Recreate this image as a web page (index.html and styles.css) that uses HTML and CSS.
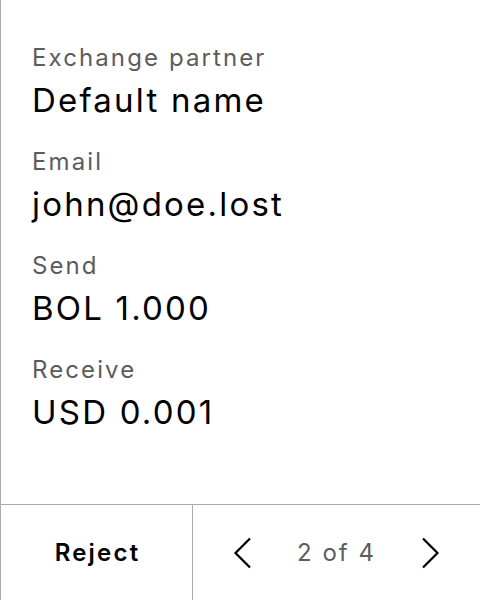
FILE: index.html
```html
<!DOCTYPE html>
<html>
<head>
<meta charset="utf-8">
<link rel="stylesheet" href="styles.css">
</head>
<body>
<div class="panel">
  <div class="details">
    <div class="field">
      <div class="label">Exchange partner</div>
      <div class="value">Default name</div>
    </div>
    <div class="field">
      <div class="label">Email</div>
      <div class="value">john@doe.lost</div>
    </div>
    <div class="field">
      <div class="label">Send</div>
      <div class="value">BOL 1.000</div>
    </div>
    <div class="field">
      <div class="label">Receive</div>
      <div class="value">USD 0.001</div>
    </div>
  </div>
  <div class="footer">
    <button class="reject">Reject</button>
    <div class="pager">
      <svg class="chev" width="20" height="32" viewBox="0 0 20 32"><path d="M17 1.5 L2.5 16 L17 30.5" fill="none" stroke="#000" stroke-width="2.2"/></svg>
      <span class="count">2 of 4</span>
      <svg class="chev" width="20" height="32" viewBox="0 0 20 32"><path d="M3 1.5 L17.5 16 L3 30.5" fill="none" stroke="#000" stroke-width="2.2"/></svg>
    </div>
  </div>
</div>
</body>
</html>
```
FILE: styles.css
```css
html, body {
  margin: 0;
  padding: 0;
  background: #fff;
}
.panel {
  width: 480px;
  height: 600px;
  box-sizing: border-box;
  border-left: 1px solid #aaa;
  display: flex;
  flex-direction: column;
  font-family: Inter, "Noto Sans", sans-serif;
  color: #000;
}
.details {
  flex: 1;
  padding: 42px 0 0 31px;
  display: flex;
  flex-direction: column;
  gap: 26px;
}
.field {
  display: flex;
  flex-direction: column;
  gap: 6px;
}
.label {
  font-size: 24px;
  line-height: 32px;
  letter-spacing: 2.1px;
  color: #5c5c5c;
}
.value {
  font-size: 33px;
  line-height: 40px;
  letter-spacing: 2.2px;
  color: #000;
}
.footer {
  height: 96px;
  box-sizing: border-box;
  border-top: 1px solid #aaa;
  display: flex;
}
.reject {
  width: 192px;
  box-sizing: border-box;
  border: none;
  border-right: 1px solid #aaa;
  background: none;
  font-family: inherit;
  font-size: 24px;
  font-weight: 600;
  letter-spacing: 2.2px;
  text-indent: 2px;
  color: #000;
  padding: 0;
}
.pager {
  flex: 1;
  display: flex;
  align-items: center;
  justify-content: center;
  gap: 44px;
}
.count {
  font-size: 24px;
  line-height: 32px;
  letter-spacing: 2px;
  color: #5c5c5c;
}
.chev {
  display: block;
}
```
